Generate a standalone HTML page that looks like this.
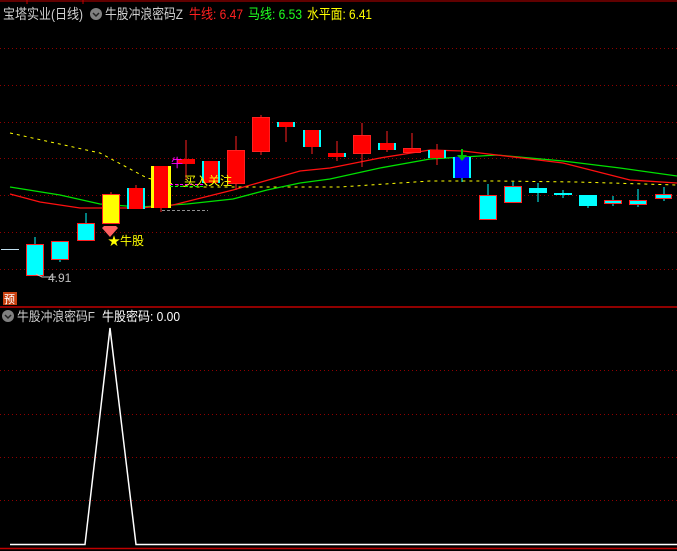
<!DOCTYPE html>
<html><head><meta charset="utf-8"><style>
html,body{margin:0;padding:0;background:#000;width:677px;height:551px;overflow:hidden}
svg{display:block}
text{font-family:"Liberation Sans","Noto Sans CJK SC",sans-serif}
</style></head><body>
<svg width="677" height="551" viewBox="0 0 677 551" xmlns="http://www.w3.org/2000/svg">
<rect width="677" height="551" fill="#000"/>
<line x1="0" y1="1" x2="677" y2="1" stroke="#c00000"/>
<line x1="27" y1="0" x2="27" y2="4" stroke="#c00000"/>
<line x1="83" y1="0" x2="83" y2="4" stroke="#c00000"/>
<g stroke="#900000" stroke-dasharray="1,3">
<line x1="0" y1="48.5" x2="677" y2="48.5"/><line x1="0" y1="85.5" x2="677" y2="85.5"/>
<line x1="0" y1="122.5" x2="677" y2="122.5"/><line x1="0" y1="158.5" x2="677" y2="158.5"/>
<line x1="0" y1="195.5" x2="677" y2="195.5"/><line x1="0" y1="232.5" x2="677" y2="232.5"/>
<line x1="0" y1="269.5" x2="677" y2="269.5"/>
<line x1="0" y1="370.5" x2="677" y2="370.5"/><line x1="0" y1="414.5" x2="677" y2="414.5"/>
<line x1="0" y1="457.5" x2="677" y2="457.5"/><line x1="0" y1="500.5" x2="677" y2="500.5"/>
</g>
<line x1="0" y1="307" x2="677" y2="307" stroke="#c00000" stroke-width="1.5"/>
<line x1="0" y1="548.5" x2="677" y2="548.5" stroke="#c00000" stroke-width="1.5"/>
<!-- header -->
<text x="3" y="19" font-size="14" fill="#d0d0d0" textLength="80" lengthAdjust="spacingAndGlyphs">宝塔实业(日线)</text>
<circle cx="96" cy="14" r="6" fill="#808080"/><path d="M93 13 L96 16 L99 13" stroke="#222" fill="none" stroke-width="1.5"/>
<text x="105" y="19" font-size="14" fill="#d0d0d0" textLength="78" lengthAdjust="spacingAndGlyphs">牛股冲浪密码Z</text>
<text x="189" y="19" font-size="14" fill="#ff2020" textLength="54" lengthAdjust="spacingAndGlyphs">牛线: 6.47</text>
<text x="248" y="19" font-size="14" fill="#20ff20" textLength="54" lengthAdjust="spacingAndGlyphs">马线: 6.53</text>
<text x="307" y="19" font-size="14" fill="#ffff00" textLength="65" lengthAdjust="spacingAndGlyphs">水平面: 6.41</text>
<!-- MAs -->
<polyline fill="none" stroke="#ffff00" stroke-dasharray="3,4" points="10,133 100,153 147,178 187,187 213,187 340,187 430,181 497,181 577,182 677,185"/>
<polyline fill="none" stroke="#00e000" stroke-width="1.3" points="10,187 60,195 100,204 140,207 187,204 233,199 267,190 300,183 330,179 380,168 430,159 497,155 530,158 563,161 620,168 677,176"/>
<polyline fill="none" stroke="#ff1010" stroke-width="1.3" points="10,194 40,202 80,208 140,208 173,205 233,190 300,171 330,168 380,158 430,150 463,151 497,155 563,163 630,180 677,183"/>
<!-- candles -->
<g stroke-width="1">
<line x1="35" y1="237" x2="35" y2="244" stroke="#00ffff"/><rect x="26.5" y="244.5" width="17" height="31" fill="#00ffff" stroke="#ff2020"/>
<line x1="60" y1="259" x2="60" y2="262" stroke="#00ffff"/><rect x="51.5" y="241.5" width="17" height="18" fill="#00ffff" stroke="#ff2020"/>
<line x1="86" y1="213" x2="86" y2="223" stroke="#00ffff"/><rect x="77.5" y="223.5" width="17" height="17" fill="#00ffff" stroke="#ff2020"/>
<line x1="111" y1="192" x2="111" y2="194" stroke="#ff2020"/><rect x="102.5" y="194.5" width="17" height="29" fill="#ffff00" stroke="#ff2020"/>
<line x1="136" y1="185" x2="136" y2="188" stroke="#ff2020"/><rect x="127" y="188" width="18" height="21" fill="#ff0000"/><rect x="127" y="188" width="2" height="21" fill="#00ffff"/><rect x="143" y="188" width="2" height="21" fill="#00ffff"/>
<line x1="161" y1="208" x2="161" y2="212" stroke="#ff2020"/><rect x="151" y="166" width="20" height="42" fill="#ff0000"/><rect x="151" y="166" width="3" height="42" fill="#ffff00"/><rect x="168" y="166" width="3" height="42" fill="#ffff00"/>
<line x1="186" y1="140" x2="186" y2="180" stroke="#ff2020"/><rect x="177" y="159" width="18" height="5" fill="#ff0000"/>
<rect x="202" y="161" width="18" height="22" fill="#ff0000"/><rect x="202" y="161" width="2" height="22" fill="#00ffff"/><rect x="218" y="161" width="2" height="22" fill="#00ffff"/>
<line x1="236" y1="136" x2="236" y2="190" stroke="#ff2020"/><rect x="227.5" y="150.5" width="17" height="33" fill="#ff0000" stroke="#ff2020"/>
<line x1="261" y1="115" x2="261" y2="155" stroke="#ff2020"/><rect x="252.5" y="117.5" width="17" height="34" fill="#ff0000" stroke="#ff2020"/>
<line x1="286" y1="122" x2="286" y2="142" stroke="#ff2020"/><rect x="277" y="122" width="18" height="5" fill="#ff0000"/><rect x="277" y="122" width="2" height="5" fill="#00ffff"/><rect x="293" y="122" width="2" height="5" fill="#00ffff"/>
<line x1="312" y1="147" x2="312" y2="154" stroke="#ff2020"/><rect x="303" y="130" width="18" height="17" fill="#ff0000"/><rect x="303" y="130" width="2" height="17" fill="#00ffff"/><rect x="319" y="130" width="2" height="17" fill="#00ffff"/>
<line x1="337" y1="141" x2="337" y2="161" stroke="#ff2020"/><rect x="328" y="153" width="18" height="4" fill="#ff0000"/><rect x="344" y="153" width="2" height="4" fill="#00ffff"/>
<line x1="362" y1="123" x2="362" y2="167" stroke="#ff2020"/><rect x="353.5" y="135.5" width="17" height="18" fill="#ff0000" stroke="#ff2020"/>
<line x1="387" y1="131" x2="387" y2="152" stroke="#ff2020"/><rect x="378" y="143" width="18" height="7" fill="#ff0000"/><rect x="378" y="143" width="2" height="7" fill="#00ffff"/><rect x="394" y="143" width="2" height="7" fill="#00ffff"/>
<line x1="412" y1="133" x2="412" y2="153" stroke="#ff2020"/><rect x="403.5" y="148.5" width="17" height="4" fill="#ff0000" stroke="#ff2020"/>
<line x1="437" y1="144" x2="437" y2="165" stroke="#ff2020"/><rect x="428" y="150" width="18" height="8" fill="#ff0000"/><rect x="428" y="150" width="2" height="8" fill="#00ffff"/><rect x="444" y="150" width="2" height="8" fill="#00ffff"/>
<line x1="462" y1="178" x2="462" y2="182" stroke="#00ffff"/><rect x="453" y="157" width="18" height="21" fill="#0000ff"/><rect x="453" y="157" width="2" height="21" fill="#00ffff"/><rect x="469" y="157" width="2" height="21" fill="#00ffff"/>
<line x1="462" y1="149" x2="462" y2="158" stroke="#00c000" stroke-width="2"/><path d="M457 155 L467 155 L462 161 Z" fill="#00c000"/>
<line x1="488" y1="184" x2="488" y2="195" stroke="#00ffff"/><rect x="479.5" y="195.5" width="17" height="24" fill="#00ffff" stroke="#ff2020"/>
<line x1="513" y1="182" x2="513" y2="186" stroke="#00ffff"/><rect x="504.5" y="186.5" width="17" height="16" fill="#00ffff" stroke="#ff2020"/>
<line x1="538" y1="183" x2="538" y2="202" stroke="#00ffff"/><rect x="529" y="188" width="18" height="5" fill="#00ffff"/>
<line x1="563" y1="190" x2="563" y2="198" stroke="#00ffff"/><rect x="554" y="193" width="18" height="2" fill="#00ffff"/>
<line x1="588" y1="195" x2="588" y2="208" stroke="#00ffff"/><rect x="579" y="195" width="18" height="11" fill="#00ffff"/>
<line x1="613" y1="196" x2="613" y2="206" stroke="#00ffff"/><rect x="604.5" y="200.5" width="17" height="3" fill="#00ffff" stroke="#ff2020"/>
<line x1="638" y1="189" x2="638" y2="207" stroke="#00ffff"/><rect x="629.5" y="200.5" width="17" height="4" fill="#00ffff" stroke="#ff2020"/>
<line x1="664" y1="187" x2="664" y2="201" stroke="#00ffff"/><rect x="655.5" y="194.5" width="16" height="4" fill="#00ffff" stroke="#ff2020"/>
</g>
<!-- annotations -->
<line x1="1" y1="249.5" x2="19" y2="249.5" stroke="#c0e0f0"/>
<path d="M36 274 L42 277 L56 277" stroke="#c0c0c0" fill="none"/>
<text x="48" y="282" font-size="12" fill="#c0c0c0">4.91</text>
<line x1="162" y1="210.5" x2="208" y2="210.5" stroke="#909090" stroke-dasharray="3,2"/>
<line x1="170" y1="184.5" x2="205" y2="184.5" stroke="#ff00ff" stroke-dasharray="3,2"/>
<line x1="170" y1="186.5" x2="205" y2="186.5" stroke="#00ff00" stroke-dasharray="3,2"/>
<text x="171" y="167" font-size="12" fill="#ff00ff">牛</text>
<text x="184" y="185" font-size="12" fill="#ffff00">买入关注</text>
<path d="M102 228 L118 228 L110 237 Z M104 226 L116 226 L118 228 L102 228 Z" fill="#ff6060"/>
<text x="108" y="245" font-size="12" fill="#ffff00">★牛股</text>
<rect x="3" y="292" width="14" height="13" fill="#c84010"/>
<text x="4" y="303" font-size="11" fill="#fff">预</text>
<!-- lower panel -->
<circle cx="8" cy="316" r="6" fill="#808080"/><path d="M5 315 L8 318 L11 315" stroke="#222" fill="none" stroke-width="1.5"/>
<text x="17" y="321" font-size="13" fill="#d0d0d0" textLength="78" lengthAdjust="spacingAndGlyphs">牛股冲浪密码F</text>
<text x="102" y="321" font-size="13" fill="#ffffff" textLength="78" lengthAdjust="spacingAndGlyphs">牛股密码: 0.00</text>
<polyline fill="none" stroke="#ffffff" stroke-width="1.5" points="10,544.5 85,544.5 110,328 136,544.5 677,544.5"/>
</svg>
</body></html>
